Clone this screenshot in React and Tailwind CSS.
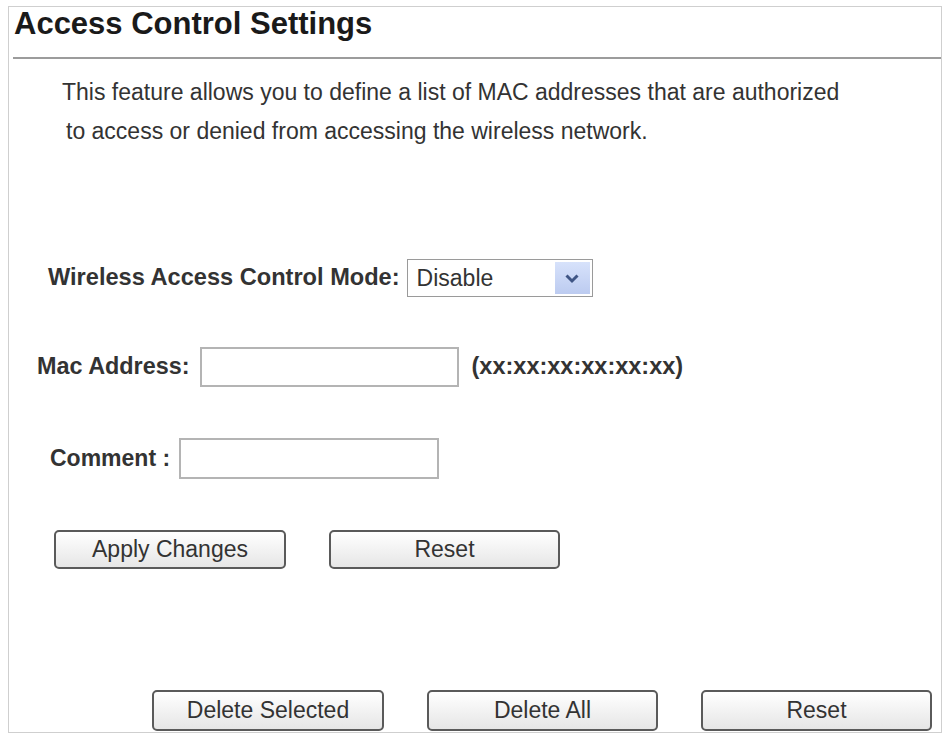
import React from "react";

const Btn = ({ label, w = "w-[232px]", h = "h-[39px]" }) => (
  <button
    className={`${w} ${h} rounded-[5px] border-2 border-[#5a5a5a] bg-gradient-to-b from-white to-[#e6e6e6] text-[23px] text-[#333] leading-none`}
  >
    {label}
  </button>
);

const App = () => {
  return (
    <div className="w-[946px] h-[740px] bg-white overflow-hidden font-['Liberation_Sans',Arial,sans-serif] text-[#222]">
      <div className="ml-[8px] mt-[6px] w-[934px] h-[727px] border border-[#cfcfcf]">
        <h1 className="pl-[5px] text-[31px] font-bold leading-[34px] text-[#1a1a1a]">
          Access Control Settings
        </h1>
        <div className="ml-[4px] mt-[16px] h-[2px] bg-[#9c9c9c]" />

        <p className="mt-[14px] pl-[53px] text-[23px] leading-[39px] text-[#333]">
          This feature allows you to define a list of MAC addresses that are authorized
          <br />
          <span className="pl-[4px]">to access or denied from accessing the wireless network.</span>
        </p>

        <div className="mt-[108px] flex items-center pl-[39px]">
          <span className="text-[23.6px] font-bold text-[#333]">Wireless Access Control Mode:</span>
          <div className="ml-[7px] w-[186px] h-[38px] border border-[#9a9a9a] flex items-center justify-between pl-[9px] pr-[2px]">
            <span className="text-[23px] text-[#333]">Disable</span>
            <div className="w-[35px] h-[32px] bg-gradient-to-b from-[#d7e2fb] to-[#bccbf0] flex items-center justify-center">
              <svg width="16" height="11" viewBox="0 0 16 11">
                <path d="M2.5 2.5 L8 8 L13.5 2.5" fill="none" stroke="#3f5585" strokeWidth="3" />
              </svg>
            </div>
          </div>
        </div>

        <div className="mt-[50px] flex items-center pl-[28px]">
          <span className="text-[23.4px] font-bold text-[#333]">Mac Address:</span>
          <div className="ml-[10px] w-[259px] h-[40px] border-2 border-[#b4b4b4]" />
          <span className="ml-[13px] text-[23.5px] font-bold text-[#333]">(xx:xx:xx:xx:xx:xx)</span>
        </div>

        <div className="mt-[51px] flex items-center pl-[41px]">
          <span className="text-[23px] font-bold text-[#333]">Comment :</span>
          <div className="ml-[9px] w-[260px] h-[41px] border-2 border-[#b4b4b4]" />
        </div>

        <div className="mt-[51px] flex gap-[43px] pl-[45px]">
          <Btn label="Apply Changes" />
          <Btn label="Reset" w="w-[231px]" />
        </div>

        <div className="mt-[121px] flex gap-[43px] pl-[143px]">
          <Btn label="Delete Selected" h="h-[41px]" />
          <Btn label="Delete All" w="w-[231px]" h="h-[41px]" />
          <Btn label="Reset" w="w-[231px]" h="h-[41px]" />
        </div>
      </div>
    </div>
  );
};

export default App;
